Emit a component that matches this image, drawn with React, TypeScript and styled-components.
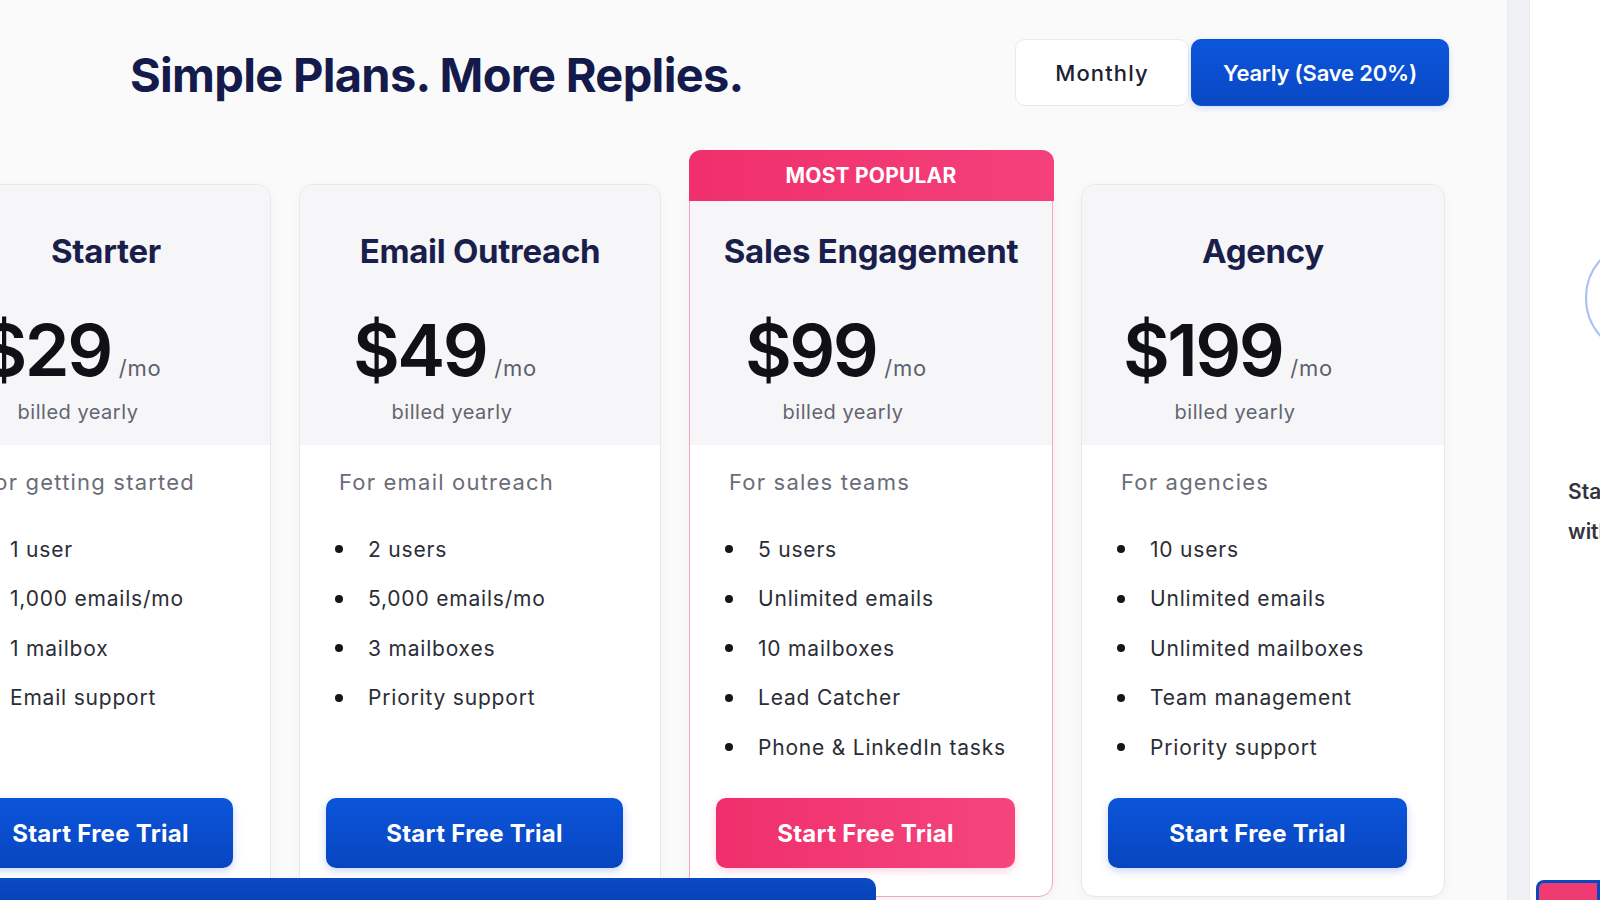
import React from "react";
import styled, { createGlobalStyle } from "styled-components";

const GlobalStyle = createGlobalStyle`
  html, body { margin: 0; padding: 0; }
  body {
    background: #fafafb;
    font-family: Inter, "Open Sans", Arial, sans-serif;
    overflow: hidden;
  }
  * { box-sizing: border-box; }
`;

const Page = styled.div`
  position: relative;
  display: flex;
  width: 1600px;
  height: 900px;
  overflow: hidden;
  background: #fafafb;
`;

const Main = styled.main`
  flex: 0 0 1507px;
  display: flex;
  flex-direction: column;
  padding-top: 39px;
  overflow: hidden;
`;

const Header = styled.header`
  display: flex;
  justify-content: space-between;
  align-items: flex-start;
  padding-left: 130px;
  padding-right: 58px;
`;

const Title = styled.h1`
  margin: 8px 0 0;
  font-size: 47px;
  line-height: 56px;
  font-weight: 700;
  letter-spacing: -0.7px;
  color: #141a4b;
`;

const Toggle = styled.div`
  display: flex;
  gap: 2px;
`;

const ToggleButton = styled.button<{ $active?: boolean; $w: number }>`
  width: ${(p) => p.$w}px;
  height: 67px;
  border-radius: 10px;
  font-family: inherit;
  font-size: 22px;
  font-weight: ${(p) => (p.$active ? 600 : 500)};
  letter-spacing: ${(p) => (p.$active ? "-0.2px" : "1.1px")};
  cursor: pointer;
  border: 1.5px solid ${(p) => (p.$active ? "#0a4ed2" : "#e9eaee")};
  color: ${(p) => (p.$active ? "#ffffff" : "#1d2033")};
  background: ${(p) =>
    p.$active ? "linear-gradient(180deg, #0b56dc 0%, #0948c4 100%)" : "#ffffff"};
  box-shadow: ${(p) => (p.$active ? "0 2px 6px rgba(10,70,200,0.18)" : "none")};
`;

const Cards = styled.section`
  display: grid;
  grid-template-columns: 330px 362px 364px 364px;
  gap: 28px;
  margin-top: 78px;
  margin-left: -59px;
  height: 713px;
`;

const Card = styled.article<{ $featured?: boolean }>`
  position: relative;
  display: flex;
  flex-direction: column;
  background: #ffffff;
  border: 1.5px solid ${(p) => (p.$featured ? "#f6a6bf" : "#e7e8ec")};
  border-radius: 14px;
  box-shadow: 0 2px 10px rgba(20, 25, 60, 0.04);
`;

const Badge = styled.div`
  position: absolute;
  top: -35px;
  left: -1.5px;
  right: -1.5px;
  height: 51px;
  border-radius: 12px 12px 0 0;
  background: linear-gradient(90deg, #f02f6c 0%, #f4417b 100%);
  color: #ffffff;
  font-size: 21px;
  font-weight: 700;
  letter-spacing: 0.2px;
  display: flex;
  justify-content: center;
  align-items: center;
  text-transform: uppercase;
  z-index: 1;
`;

const CardHead = styled.div`
  height: 260px;
  padding-top: 46px;
  text-align: center;
  background: #f6f6f8;
  border-radius: 13px 13px 0 0;
`;

const PlanName = styled.h2`
  margin: 0;
  font-size: 33px;
  line-height: 40px;
  font-weight: 700;
  letter-spacing: -0.3px;
  color: #1a1e4b;
`;

const PriceBlock = styled.div`
  padding-right: 70px;
  margin-top: 43px;
`;

const PriceRow = styled.div`
  display: flex;
  justify-content: center;
  align-items: baseline;
  gap: 8px;
`;

const Amount = styled.span`
  font-size: 72px;
  line-height: 72px;
  font-weight: 600;
  letter-spacing: -2.5px;
  color: #101116;
`;

const Per = styled.span`
  font-size: 22px;
  letter-spacing: 0.8px;
  color: #5c5f6b;
`;

const Billed = styled.div`
  margin-top: 14px;
  padding-left: 14px;
  font-size: 20px;
  line-height: 24px;
  letter-spacing: 0.5px;
  color: #62656f;
`;

const CardBody = styled.div`
  flex: 1;
  display: flex;
  flex-direction: column;
  padding: 23px 37px 28px 26px;
`;

const Desc = styled.p`
  margin: 0;
  padding-left: 13px;
  font-size: 22px;
  line-height: 28px;
  letter-spacing: 1.2px;
  color: #6a6d79;
`;

const Features = styled.ul`
  list-style: none;
  margin: 39px 0 0;
  padding: 0 0 0 9px;
  display: flex;
  flex-direction: column;
  gap: 21.5px;
`;

const Feature = styled.li`
  display: flex;
  align-items: center;
  gap: 25px;
  height: 28px;
  font-size: 21px;
  color: #2b2d36;
  letter-spacing: 0.8px;
  &::before {
    content: "";
    flex: 0 0 8px;
    width: 8px;
    height: 8px;
    border-radius: 50%;
    background: #15161c;
  }
`;

const CTA = styled.button<{ $pink?: boolean }>`
  margin-top: auto;
  width: 100%;
  height: 70px;
  border: none;
  border-radius: 10px;
  font-family: inherit;
  font-size: 24px;
  font-weight: 700;
  letter-spacing: 0.3px;
  color: #ffffff;
  cursor: pointer;
  background: ${(p) =>
    p.$pink
      ? "linear-gradient(90deg, #ef2f6b 0%, #f5457d 100%)"
      : "linear-gradient(180deg, #0b55da 0%, #0845bf 100%)"};
  box-shadow: ${(p) =>
    p.$pink ? "0 3px 8px rgba(240,50,110,0.22)" : "0 3px 8px rgba(10,70,200,0.22)"};
`;

const Strip = styled.div`
  flex: 0 0 23px;
  background: #f0f1f4;
  border-left: 1px solid #e8e9ed;
  border-right: 1px solid #e9eaee;
`;

const Side = styled.aside`
  flex: 1;
  display: flex;
  flex-direction: column;
  background: #ffffff;
  overflow: hidden;
`;

const Ring = styled.div`
  width: 116px;
  height: 116px;
  margin: 240px 0 0 55px;
  border: 2px solid #a9c1f1;
  border-radius: 50%;
  flex: 0 0 auto;
`;

const SideText = styled.p`
  margin: 116px 0 0 38px;
  font-size: 21px;
  line-height: 40px;
  font-weight: 600;
  color: #33343d;
  white-space: nowrap;
`;

const SideButton = styled.div`
  margin: auto 0 0 6px;
  height: 20px;
  border: 3px solid #0a48c2;
  border-bottom: none;
  border-radius: 8px 0 0 0;
  background: #f03a72;
`;

const BottomBar = styled.div`
  position: absolute;
  left: 0;
  bottom: 0;
  width: 876px;
  height: 22px;
  background: linear-gradient(180deg, #0a4ac6 0%, #0843b8 100%);
  border-radius: 0 10px 0 0;
  z-index: 2;
`;

type Plan = {
  name: string;
  price: string;
  desc: string;
  features: string[];
  featured?: boolean;
};

const plans: Plan[] = [
  {
    name: "Starter",
    price: "$29",
    desc: "For getting started",
    features: ["1 user", "1,000 emails/mo", "1 mailbox", "Email support"],
  },
  {
    name: "Email Outreach",
    price: "$49",
    desc: "For email outreach",
    features: ["2 users", "5,000 emails/mo", "3 mailboxes", "Priority support"],
  },
  {
    name: "Sales Engagement",
    price: "$99",
    desc: "For sales teams",
    features: [
      "5 users",
      "Unlimited emails",
      "10 mailboxes",
      "Lead Catcher",
      "Phone & LinkedIn tasks",
    ],
    featured: true,
  },
  {
    name: "Agency",
    price: "$199",
    desc: "For agencies",
    features: [
      "10 users",
      "Unlimited emails",
      "Unlimited mailboxes",
      "Team management",
      "Priority support",
    ],
  },
];

export default function App() {
  return (
    <>
      <GlobalStyle />
      <Page>
        <Main>
          <Header>
            <Title>Simple Plans. More Replies.</Title>
            <Toggle>
              <ToggleButton $w={174}>Monthly</ToggleButton>
              <ToggleButton $w={258} $active>
                Yearly (Save 20%)
              </ToggleButton>
            </Toggle>
          </Header>
          <Cards>
            {plans.map((p) => (
              <Card key={p.name} $featured={p.featured}>
                {p.featured && <Badge>Most Popular</Badge>}
                <CardHead>
                  <PlanName>{p.name}</PlanName>
                  <PriceBlock>
                    <PriceRow>
                      <Amount>{p.price}</Amount>
                      <Per>/mo</Per>
                    </PriceRow>
                    <Billed>billed yearly</Billed>
                  </PriceBlock>
                </CardHead>
                <CardBody>
                  <Desc>{p.desc}</Desc>
                  <Features>
                    {p.features.map((f) => (
                      <Feature key={f}>{f}</Feature>
                    ))}
                  </Features>
                  <CTA $pink={p.featured}>Start Free Trial</CTA>
                </CardBody>
              </Card>
            ))}
          </Cards>
        </Main>
        <Strip />
        <Side>
          <Ring />
          <SideText>
            Start your free trial
            <br />
            with no credit card
          </SideText>
          <SideButton />
        </Side>
        <BottomBar />
      </Page>
    </>
  );
}
